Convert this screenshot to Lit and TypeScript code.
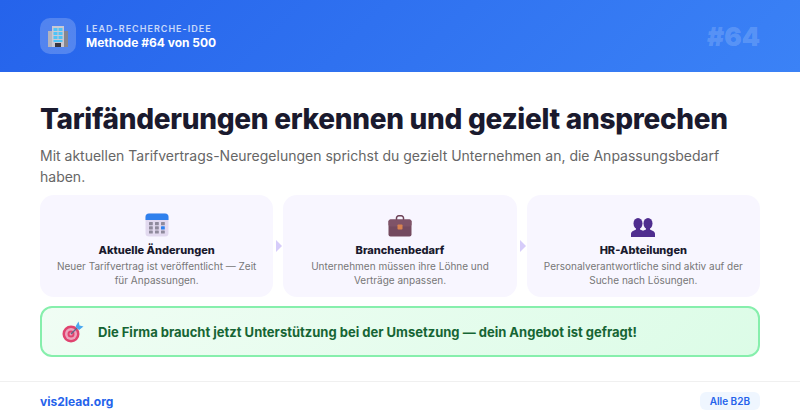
import { LitElement, html, css, svg } from 'lit';
import { customElement } from 'lit/decorators.js';

const building = html`<svg width="22" height="24" viewBox="0 0 22 24">
  <rect x="1" y="7" width="20" height="16" fill="#9a9aa6"/>
  <rect x="1" y="7" width="5" height="16" fill="#b4b4be"/>
  <rect x="16" y="7" width="5" height="16" fill="#86868f"/>
  <rect x="5" y="2" width="12" height="21" fill="#c9c9d4"/>
  ${[4, 8, 12].map((y) =>
    [6.5, 11.5].map((x) => svg`<rect x=${x} y=${y} width="4" height="3" fill="#4fc3f7"/>`)
  )}
  <rect x="6.5" y="16" width="9" height="2" fill="#4fc3f7"/>
  <rect x="8" y="19" width="6" height="4" fill="#37353f"/>
</svg>`;

const calendar = html`<svg width="24" height="24" viewBox="0 0 24 24">
  <rect x="0.5" y="0.5" width="23" height="23" rx="3.5" fill="#e2d9ef"/>
  <path d="M.5 7V4a3.5 3.5 0 0 1 3.500-3.500h16A3.500 3.500 0 0 1 23.500 4v3z" fill="#2f80ed"/>
  ${[9, 13.200, 17.400].map((y) =>
    [4, 10, 16].map(
      (x) => svg`<rect x=${x} y=${y} width="3.800" height="3.200" rx=".5" fill=${x === 16 && y === 13.200 ? '#2f80ed' : '#8f8a9c'}/>`
    )
  )}
</svg>`;

const briefcase = html`<svg width="24" height="22" viewBox="0 0 24 22">
  <path d="M8.500 5V3a2.200 2.200 0 0 1 2.200-2.200h2.600A2.200 2.200 0 0 1 15.500 3v2" fill="none" stroke="#6d4257" stroke-width="1.500"/>
  <rect x="0.500" y="4.500" width="23" height="17" rx="2" fill="#744a5f"/>
  <rect x="0.500" y="4.500" width="23" height="7" rx="2" fill="#7f5368"/>
  <rect x="9.500" y="9.500" width="5" height="5" rx=".8" fill="#d9824f"/>
</svg>`;

const people = html`<svg width="24" height="19" viewBox="0 0 24 19">
  <g fill="#4f2d8f">
    <ellipse cx="7" cy="5.500" rx="4.500" ry="5.500"/>
    <ellipse cx="17" cy="5.500" rx="4.500" ry="5.500"/>
    <path d="M0 19v-3c0-1.500.8-2.400 2-3l3-1.500V9h4v2.500l3 1.300 3-1.300V9h4v2.500l3 1.500c1.200.6 2 1.500 2 3v3z"/>
  </g>
</svg>`;

const target = html`<svg width="22" height="22" viewBox="0 0 22 22">
  <circle cx="9" cy="13" r="8.500" fill="#e0436f"/>
  <circle cx="9" cy="13" r="6" fill="#eda4bd"/>
  <circle cx="9" cy="13" r="3.500" fill="#e0436f"/>
  <circle cx="9" cy="13" r="1.500" fill="#eda4bd"/>
  <path d="M9 13 17 5" stroke="#5c6a8a" stroke-width="1.200"/>
  <path d="M13.500 5.500 16.500 .5 17.500 4.500 21.500 5.500 17 9z" fill="#4aa8f0"/>
</svg>`;

const steps = [
  { icon: calendar, title: 'Aktuelle Änderungen', text: 'Neuer Tarifvertrag ist veröffentlicht — Zeit für Anpassungen.' },
  { icon: briefcase, title: 'Branchenbedarf', text: 'Unternehmen müssen ihre Löhne und Verträge anpassen.' },
  { icon: people, title: 'HR-Abteilungen', text: 'Personalverantwortliche sind aktiv auf der Suche nach Lösungen.' },
];

@customElement('app-root')
export class AppRoot extends LitElement {
  static styles = css`
    :host {
      display: flex;
      flex-direction: column;
      width: 800px;
      height: 420px;
      overflow: hidden;
      background: #fff;
      font-family: Inter, 'Liberation Sans', sans-serif;
    }
    .header {
      height: 72px;
      box-sizing: border-box;
      padding: 0 40px;
      display: flex;
      align-items: center;
      justify-content: space-between;
      background: linear-gradient(135deg, #2563eb, #3b82f6);
    }
    .brand {
      display: flex;
      align-items: center;
      gap: 10px;
    }
    .logo {
      width: 36px;
      height: 36px;
      border-radius: 10px;
      background: rgba(255, 255, 255, 0.2);
      display: flex;
      align-items: center;
      justify-content: center;
    }
    .eyebrow {
      font-size: 9px;
      line-height: 13px;
      font-weight: 600;
      letter-spacing: 1px;
      color: rgba(255, 255, 255, 0.75);
    }
    .method {
      font-size: 12px;
      line-height: 15px;
      font-weight: 700;
      color: #fff;
    }
    .num {
      font-size: 26px;
      font-weight: 900;
      color: rgba(255, 255, 255, 0.18);
    }
    .main {
      flex: 1;
      padding: 29px 40px 0;
    }
    h1 {
      margin: 0;
      font-size: 28px;
      line-height: 36px;
      font-weight: 800;
      letter-spacing: -0.300px;
      color: #1a1a2e;
    }
    .lead {
      margin: 8px 0 0;
      font-size: 14px;
      line-height: 21px;
      color: #666;
    }
    .steps {
      display: grid;
      grid-template-columns: repeat(3, 1fr);
      gap: 10px;
      margin-top: 8px;
    }
    .step {
      position: relative;
      height: 102px;
      box-sizing: border-box;
      padding-top: 16px;
      border-radius: 14px;
      background: #f8f6ff;
      text-align: center;
    }
    .step + .step::before {
      content: '';
      position: absolute;
      left: -7px;
      top: 45px;
      border-left: 6px solid #d6ccfa;
      border-top: 6px solid transparent;
      border-bottom: 6px solid transparent;
    }
    .icon {
      height: 26px;
      display: flex;
      align-items: flex-end;
      justify-content: center;
    }
    .step h3 {
      margin: 6px 0 0;
      font-size: 11px;
      line-height: 14px;
      font-weight: 800;
      color: #1a1a2e;
    }
    .step p {
      margin: 2px 12px 0;
      font-size: 10px;
      line-height: 14px;
      color: #777;
    }
    .callout {
      display: flex;
      align-items: center;
      gap: 14px;
      height: 51px;
      box-sizing: border-box;
      margin-top: 9px;
      padding: 0 20px;
      border: 2px solid #86efac;
      border-radius: 12px;
      background: linear-gradient(135deg, #f0fdf4, #dcfce7);
      font-size: 13px;
      font-weight: 700;
      color: #166534;
    }
    .footer {
      height: 39px;
      box-sizing: border-box;
      padding: 0 40px;
      display: flex;
      align-items: center;
      justify-content: space-between;
      border-top: 1px solid #f0f0f0;
    }
    .site {
      font-size: 12px;
      font-weight: 700;
      color: #2563eb;
    }
    .tag {
      padding: 3px 10px;
      border-radius: 6px;
      background: #eff6ff;
      font-size: 10px;
      line-height: 12px;
      font-weight: 600;
      color: #2563eb;
    }
  `;

  render() {
    return html`
      <div class="header">
        <div class="brand">
          <div class="logo">${building}</div>
          <div>
            <div class="eyebrow">LEAD-RECHERCHE-IDEE</div>
            <div class="method">Methode #64 von 500</div>
          </div>
        </div>
        <div class="num">#64</div>
      </div>
      <div class="main">
        <h1>Tarifänderungen erkennen und gezielt ansprechen</h1>
        <p class="lead">Mit aktuellen Tarifvertrags-Neuregelungen sprichst du gezielt Unternehmen an, die Anpassungsbedarf haben.</p>
        <div class="steps">
          ${steps.map(
            (s) => html`
              <div class="step">
                <div class="icon">${s.icon}</div>
                <h3>${s.title}</h3>
                <p>${s.text}</p>
              </div>
            `
          )}
        </div>
        <div class="callout">
          ${target}
          <span>Die Firma braucht jetzt Unterstützung bei der Umsetzung — dein Angebot ist gefragt!</span>
        </div>
      </div>
      <div class="footer">
        <span class="site">vis2lead.org</span>
        <span class="tag">Alle B2B</span>
      </div>
    `;
  }
}
